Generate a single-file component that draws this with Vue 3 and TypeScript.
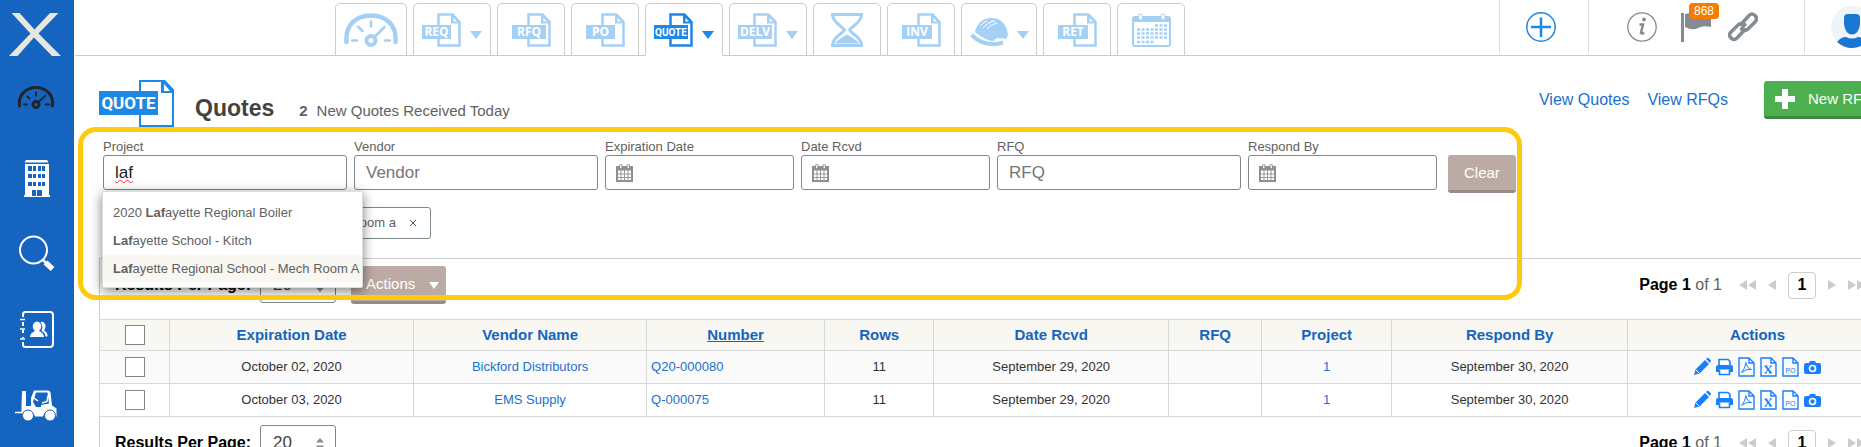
<script setup lang="ts">
import { ref } from 'vue'

interface Tab {
  id: string
  kind: 'gauge' | 'doc' | 'hourglass' | 'helmet' | 'calendar'
  label: string
  labelWidth?: number
  menu?: boolean
  active?: boolean
}

const tabs: Tab[] = [
  { id: 'dash', kind: 'gauge', label: 'Dashboard' },
  { id: 'req', kind: 'doc', label: 'REQ', labelWidth: 29, menu: true },
  { id: 'rfq', kind: 'doc', label: 'RFQ', labelWidth: 34 },
  { id: 'po', kind: 'doc', label: 'PO', labelWidth: 29 },
  { id: 'quote', kind: 'doc', label: 'QUOTE', labelWidth: 34, menu: true, active: true },
  { id: 'delv', kind: 'doc', label: 'DELV', labelWidth: 34, menu: true },
  { id: 'time', kind: 'hourglass', label: 'Pending' },
  { id: 'inv', kind: 'doc', label: 'INV', labelWidth: 30 },
  { id: 'jobs', kind: 'helmet', label: 'Jobs', menu: true },
  { id: 'ret', kind: 'doc', label: 'RET', labelWidth: 30 },
  { id: 'cal', kind: 'calendar', label: 'Calendar' },
]

interface Filter {
  id: string
  label: string
  date?: boolean
  placeholder?: string
}

const filters: Filter[] = [
  { id: 'project', label: 'Project' },
  { id: 'vendor', label: 'Vendor', placeholder: 'Vendor' },
  { id: 'expiration', label: 'Expiration Date', date: true },
  { id: 'received', label: 'Date Rcvd', date: true },
  { id: 'rfq', label: 'RFQ', placeholder: 'RFQ' },
  { id: 'respond', label: 'Respond By', date: true },
]

const values = ref<Record<string, string>>({
  project: 'laf', vendor: '', expiration: '', received: '', rfq: '', respond: '',
})

const suggestions = [
  { before: '2020 ', match: 'Laf', after: 'ayette Regional Boiler' },
  { before: '', match: 'Laf', after: 'ayette School - Kitch' },
  { before: '', match: 'Laf', after: 'ayette Regional School - Mech Room A' },
]
const highlighted = 2

const columns = [
  { key: 'exp', title: 'Expiration Date' },
  { key: 'vendor', title: 'Vendor Name' },
  { key: 'number', title: 'Number' },
  { key: 'rows', title: 'Rows' },
  { key: 'rcvd', title: 'Date Rcvd' },
  { key: 'rfq', title: 'RFQ' },
  { key: 'project', title: 'Project' },
  { key: 'respond', title: 'Respond By' },
  { key: 'actions', title: 'Actions' },
]

const quotes = [
  { exp: 'October 02, 2020', vendor: 'Bickford Distributors', number: 'Q20-000080', rows: 11, rcvd: 'September 29, 2020', project: 1, respond: 'September 30, 2020' },
  { exp: 'October 03, 2020', vendor: 'EMS Supply', number: 'Q-000075', rows: 11, rcvd: 'September 29, 2020', project: 1, respond: 'September 30, 2020' },
]

function clearFilters() {
  for (const key of Object.keys(values.value)) values.value[key] = ''
}
</script>

<template>
  <div class="app">
    <nav class="sidebar" aria-label="Main">
      <a class="logo" href="#" aria-label="Home">
        <svg viewBox="0 0 74 62"><path d="M11.500 13H19.500L34.500 29.500 50 13H58.500L38.500 33.500 61 56H52L34 37.500 17.500 56H9L30.500 33.500Z" fill="#e8e6e0" /></svg>
      </a>
      <a class="side-link" href="#" aria-label="Dashboard">
        <svg viewBox="0 62 74 76" fill="none" stroke="#20242b" stroke-linecap="round">
          <path d="M19.500 106C18 95 26 87.500 36 87.500S54 95 52.500 106" stroke-width="3" />
          <path d="M24 104.500h3M45.500 104.500h4M36 92.500v3M27.500 96.500l2 2M38 102.500l7.500-7" stroke-width="2" />
          <circle cx="36" cy="104.500" r="3" stroke-width="3" />
        </svg>
      </a>
      <a class="side-link" href="#" aria-label="Buildings">
        <svg viewBox="0 138 74 76">
          <path d="M26 160h21l1.500 2.500h-24zM25 164h24v31h1v2H24v-2h1z" fill="#fff" />
          <path d="M28 166h4v5h-4zM33 166h3v5h-3zM38 166h3v5h-3zM42 166h3v5h-3zM28 174h4v4h-4zM33 174h3v4h-3zM38 174h3v4h-3zM42 174h3v4h-3zM28 182h4v4h-4zM33 182h3v4h-3zM38 182h3v4h-3zM42 182h3v4h-3zM32 190h4v6h-4zM37 190h5v6h-5z" fill="#1565c0" />
        </svg>
      </a>
      <a class="side-link" href="#" aria-label="Search">
        <svg viewBox="0 214 74 76" fill="none" stroke="#fff">
          <circle cx="33.500" cy="250" r="13.500" stroke-width="2" />
          <path d="M43 260l3.500 3.500" stroke-width="2.500" />
          <path d="M45.500 262.500l7 6.500" stroke-width="5.500" />
        </svg>
      </a>
      <a class="side-link" href="#" aria-label="Contacts">
        <svg viewBox="0 290 74 76" fill="none" stroke="#fff" stroke-width="2">
          <path d="M23 317v-2.500q0-2.500 2.500-2.500H50q3 0 3 3v29q0 3-3 3H25.500q-2.500 0-2.500-2.500V342M23 322v4M23 330v3M23 337v1" />
          <path d="M20 319.500h5M20 329h5M20 339h5" stroke-width="1.500" />
          <path d="M30 337q0-4 5-6-3-3-2-6.500 1.500-3 4-3t4 3q1 3.500-2 6.500 5 2 5 6zM40.500 322q3-1 4.500 2t-1 6.500q4 2 3.500 6h-2q0-4-4-5.500 2-4.500-1-9z" fill="#fff" stroke="none" />
        </svg>
      </a>
      <a class="side-link" href="#" aria-label="Equipment">
        <svg viewBox="0 366 74 76" fill="none" stroke="#fff">
          <path d="M15 412.500h8" stroke-width="1.500" />
          <path d="M22 391h4v15h5v-8l3-7.500h14q2 0 2.500 2l1.500 13 4.500 3v8h-2.500q-2-5-5.500-5-4 0-5.500 5h-8q-2-6-7-6-4 0-6 3h-.5V406z" fill="#fff" stroke="none" />
          <path d="M33 402l3-9.500h11.500l1.500 11-8 1.500v2h-5z" fill="#1565c0" stroke="none" />
          <path d="M34 398l4 3M42 403l5-1.500 1-6" stroke-width="1.500" />
          <circle cx="28" cy="415.500" r="5.500" fill="#fff" stroke="#1565c0" />
          <circle cx="50" cy="415.500" r="5.500" fill="#fff" stroke="#1565c0" />
        </svg>
      </a>
    </nav>

    <div class="main">
      <header class="topbar">
        <div class="tabs">
          <a v-for="tab in tabs" :key="tab.id" href="#" class="tab" :class="[tab.kind, { active: tab.active, menu: tab.menu }]" :aria-label="tab.label">
            <svg v-if="tab.kind === 'gauge'" class="wide-icon" viewBox="0 0 54 34" fill="none" stroke="currentColor" stroke-linecap="round">
              <path d="M2.500 29C1 12 12 2.500 27 2.500S53 12 51.500 29" stroke-width="4.500" />
              <path d="M8 27.500h5M41 27.500h5M27 8.500v5M14 13.500l4.500 4.500M31 23.500l9.500-9.500" stroke-width="2.500" />
              <circle cx="27" cy="27.500" r="4.500" stroke-width="4" />
            </svg>
            <svg v-else-if="tab.kind === 'doc'" class="doc-icon" viewBox="0 0 39 34">
              <path d="M16.500 1.500H30.500L37.500 9V32.500H16.500Z" fill="#fff" stroke="currentColor" stroke-width="2.500" />
              <path d="M29 1v9.500h9V8.500L31 1Z" fill="currentColor" />
              <path d="M31.500 5v3.500h3.500z" fill="#fff" />
              <rect y="12" :width="tab.labelWidth" height="14" fill="currentColor" />
              <text :x="(tab.labelWidth ?? 0) / 2" y="23" class="doc-text" :class="{ small: tab.label.length > 4 }">{{ tab.label }}</text>
            </svg>
            <svg v-else-if="tab.kind === 'hourglass'" class="glass-icon" viewBox="0 0 36 34" fill="none" stroke="currentColor">
              <path d="M2 1.500H34M2 32.500H34" stroke-width="3" />
              <path d="M3.500 2C4 10 13 13 15.500 17 13 21 4 24 3.500 32M32.500 2C32 10 23 13 20.500 17 23 21 32 24 32.500 32" stroke-width="3" />
              <path d="M6 30.500Q8 27 18 21.500 28 27 30 30.500Z" fill="currentColor" stroke="none" />
            </svg>
            <svg v-else-if="tab.kind === 'helmet'" class="helmet-icon" viewBox="0 0 39 34" fill="none">
              <path d="M5 19Q8 6 20 5 33 4 37 17 39 23 36 26L31 25 29 28Q18 30 5 19Z" fill="currentColor" />
              <path d="M1.500 22Q15 35 33 29.500" stroke="currentColor" stroke-width="4" />
              <path d="M10 13Q13 9 17 8M13 15Q19 8 25 8M17 16Q21 11 27 10" stroke="#fff" />
              <path d="M24 29q0-4 5-4 2 0 3 3z" fill="#fff" />
            </svg>
            <svg v-else class="cal-icon" viewBox="0 0 39 34">
              <path d="M3 3H36Q39 3 39 6V31Q39 34 36 34H3Q0 34 0 31V6Q0 3 3 3Z" fill="currentColor" />
              <path d="M2 9H37V32H2Z" fill="#fff" />
              <path d="M23 12.500h12M5 16.500h30M5 20.500h30M5 24.500h30M5 29h17" stroke="currentColor" stroke-width="2.500" stroke-dasharray="3 1.500" />
              <rect x="6.500" y="1" width="4" height="6" rx="2" fill="#fff" stroke="currentColor" />
              <rect x="29" y="1" width="4" height="6" rx="2" fill="#fff" stroke="currentColor" />
            </svg>
            <svg v-if="tab.menu" class="caret" viewBox="0 0 12 8"><path d="M0 0H12L6 8Z" fill="currentColor" /></svg>
          </a>
        </div>
        <div class="tools">
          <div class="tool-group add">
            <button type="button" class="icon-button" aria-label="Add">
              <svg viewBox="0 0 30 30" fill="none" stroke="#1e88e5"><circle cx="15" cy="15" r="14.200" stroke-width="1.500" /><path d="M15 5.500V25M5 15H25" stroke-width="2.500" /></svg>
            </button>
          </div>
          <div class="tool-group status">
            <button type="button" class="icon-button" aria-label="Information">
              <svg viewBox="0 0 30 30" fill="none" stroke="#848c91"><circle cx="15" cy="15" r="14.200" stroke-width="1.300" /><path d="M12.500 12.500h3.500l-2 8.500q1.500 1 3-.5" stroke-width="2.500" /><circle cx="17" cy="7.500" r="1.900" fill="#848c91" stroke="none" /></svg>
            </button>
            <button type="button" class="icon-button flag" aria-label="Flags">
              <svg viewBox="0 0 30 30" fill="#848c91"><path d="M0 1H3V30H0ZM4 2Q10 0 17 3T30 4V15Q22 13 17 16T4 15Z" /></svg>
              <span class="badge">868</span>
            </button>
            <button type="button" class="icon-button" aria-label="Links">
              <svg viewBox="0 0 30 30" fill="none" stroke="#848c91" stroke-width="3.500" stroke-linecap="round">
                <path d="M13 12.500l8-9q3-3 6 0t0 6.500l-7 7q-3 2.500-6 .5" /><path d="M17 17.500l-8 8.500q-3 3-6 0t0-6l7-7q3-2.500 6-.5" /><path d="M13 17l4.500-4.500" stroke-width="2.500" />
              </svg>
            </button>
          </div>
          <div class="tool-group user">
            <button type="button" class="avatar" aria-label="Account">
              <svg viewBox="0 0 42 42"><circle cx="21" cy="21" r="21" fill="#eff4f9" /><path d="M13 12Q13 8 17 8H25Q29 8 29 12V18Q28 28 21 28.500 14 28 13 18ZM6 36Q10 31 15 31 21 34 27 31 32 31 36 36 29 42 21 42T6 36Z" fill="#1976d2" /></svg>
            </button>
          </div>
        </div>
      </header>

      <main class="content">
        <div class="heading">
          <svg class="heading-icon" viewBox="0 0 75 47">
            <path d="M41 1H65L74 10V46H41Z" fill="#fff" stroke="#1e88e5" stroke-width="2" />
            <path d="M62 0H66L75 10V13H62Z" fill="#1e88e5" /><path d="M65 4V11H71Z" fill="#fff" />
            <rect y="11" width="59" height="24" fill="#1e88e5" />
            <text x="29.500" y="29" class="heading-text">QUOTE</text>
          </svg>
          <h1>Quotes</h1>
          <p class="received"><strong>2</strong><span>New Quotes Received Today</span></p>
          <div class="heading-actions">
            <a href="#">View Quotes</a>
            <a href="#">View RFQs</a>
            <button type="button" class="button green">
              <svg viewBox="0 0 20 20"><path d="M7 0H13V7H20V13H13V20H7V13H0V7H7Z" fill="#fff" /></svg>
              New RFQ
            </button>
          </div>
        </div>

        <form class="filters" @submit.prevent>
          <div v-for="f in filters" :key="f.id" class="field" :class="{ date: f.date }">
            <label :for="f.id">{{ f.label }}</label>
            <div class="box">
              <svg v-if="f.date" class="date-icon" viewBox="0 0 17 18">
                <path d="M1 3H16V17H1Z" fill="#fff" stroke="#8f8f8f" stroke-width="2" />
                <path d="M0 2.500H17V6.500H0Z" fill="#8f8f8f" />
                <path d="M5 6V17M8.500 6V17M12 6V17M1 10H16M1 13.500H16" stroke="#999" />
                <rect x="3.500" y=".5" width="2.500" height="4" rx="1" fill="#eee" stroke="#8f8f8f" /><rect x="11" y=".5" width="2.500" height="4" rx="1" fill="#eee" stroke="#8f8f8f" />
              </svg>
              <input :id="f.id" v-model="values[f.id]" type="text" autocomplete="off" spellcheck="false" :placeholder="f.placeholder" :class="{ misspelled: f.id === 'project' }" />
            </div>
            <ul v-if="f.id === 'project'" class="suggestions" role="listbox">
              <li v-for="(s, i) in suggestions" :key="i" role="option" :aria-selected="i === highlighted" :class="{ highlighted: i === highlighted }">{{ s.before }}<b>{{ s.match }}</b>{{ s.after }}</li>
            </ul>
          </div>
          <button type="button" class="button brown clear" @click="clearFilters">Clear</button>
        </form>

        <div class="chips">
          <span class="chip">Lafayette Regional School - Mech room a
            <button type="button" aria-label="Remove filter"><svg viewBox="0 0 8 8"><path d="M1 1L7 7M7 1L1 7" stroke="#555" /></svg></button>
          </span>
        </div>

        <section class="panel">
          <template v-for="place in ['top', 'bottom']" :key="place">
            <div class="toolbar" :class="place">
              <label :for="'per-page-' + place">Results Per Page:</label>
              <div class="select">
                <select :id="'per-page-' + place"><option>20</option></select>
                <svg viewBox="0 0 8 12"><path d="M0 4.500L4 0 8 4.500ZM0 7.500H8L4 12Z" fill="#848c91" /></svg>
              </div>
              <button v-if="place === 'top'" type="button" class="button brown actions">Actions <svg viewBox="0 0 10 7"><path d="M0 0H10L5 7Z" fill="#fff" /></svg></button>
              <div class="pager">
                <span class="page-count"><b>Page 1</b> of 1</span>
                <button type="button" class="arrow double" aria-label="First page"><svg viewBox="0 0 17 10"><path d="M8 0V10L0 5ZM17 0V10L9 5Z" /></svg></button>
                <button type="button" class="arrow" aria-label="Previous page"><svg viewBox="0 0 8 10"><path d="M8 0V10L0 5Z" /></svg></button>
                <button type="button" class="page">1</button>
                <button type="button" class="arrow" aria-label="Next page"><svg viewBox="0 0 8 10"><path d="M0 0V10L8 5Z" /></svg></button>
                <button type="button" class="arrow double" aria-label="Last page"><svg viewBox="0 0 17 10"><path d="M0 0V10L8 5ZM9 0V10L17 5Z" /></svg></button>
              </div>
            </div>

            <table v-if="place === 'top'">
              <colgroup><col class="c-check" /><col v-for="c in columns" :key="c.key" :class="'c-' + c.key" /></colgroup>
              <thead>
                <tr>
                  <th><input type="checkbox" aria-label="Select all" /></th>
                  <th v-for="c in columns" :key="c.key"><a v-if="c.key !== 'actions'" href="#" :class="{ sorted: c.key === 'number' }">{{ c.title }}</a><span v-else>{{ c.title }}</span></th>
                </tr>
              </thead>
              <tbody>
                <tr v-for="q in quotes" :key="q.number">
                  <td><input type="checkbox" :aria-label="'Select ' + q.number" /></td>
                  <td>{{ q.exp }}</td>
                  <td><a href="#">{{ q.vendor }}</a></td>
                  <td class="left"><a href="#">{{ q.number }}</a></td>
                  <td>{{ q.rows }}</td>
                  <td>{{ q.rcvd }}</td>
                  <td></td>
                  <td><a href="#">{{ q.project }}</a></td>
                  <td>{{ q.respond }}</td>
                  <td>
                    <div class="row-actions">
                      <button type="button" aria-label="Edit"><svg viewBox="0 0 17 20"><path d="M0 18L1.500 12.500 11 3 15 7 5.500 16.500ZM12 2L13 1Q14 .5 15 1.500L16.500 3Q17.500 4 16.500 5L16 6Z" fill="#1a7ffb" /><path d="M2 13L5 16" stroke="#fff" /></svg></button>
                      <button type="button" aria-label="Print"><svg viewBox="0 0 17 20"><path d="M3 9V2.500H12L14 4.500V9M3.500 12.500V17.500H13.500V12.500" fill="#fff" stroke="#1a7ffb" stroke-width="1.600" /><path d="M2 8H15Q17 8 17 10V15H14V12.500H3V15H0V10Q0 8 2 8Z" fill="#1a7ffb" /></svg></button>
                      <button type="button" aria-label="PDF"><svg viewBox="0 0 17 20" fill="none" stroke="#1a7ffb"><path d="M1 1H11L16 6V19H1ZM11 1V6H16" stroke-width="1.400" /><path d="M3.500 15.500Q7 12 8 5.500 8.500 11 13.500 12.500 8 11.500 3.500 15.500Z" /></svg></button>
                      <button type="button" aria-label="Excel"><svg viewBox="0 0 17 20" fill="none" stroke="#1a7ffb"><path d="M1 1H11L16 6V19H1ZM11 1V6H16" stroke-width="1.400" /><path d="M5.500 9L11 16" stroke-width="2" /><path d="M11 9L5.500 16M4.500 9H7.500M9.500 9H12M4.500 16H7M9 16H12" /></svg></button>
                      <button type="button" aria-label="Purchase order"><svg viewBox="0 0 17 20" fill="none" stroke="#1a7ffb"><path d="M1 1H11L16 6V19H1ZM11 1V6H16" stroke-width="1.400" /><text x="8.500" y="16" class="po-text">PO</text></svg></button>
                      <button type="button" aria-label="Photos"><svg viewBox="0 0 17 20"><path d="M5 6L6 4H11L12 6H15Q17 6 17 8V15Q17 17 15 17H2Q0 17 0 15V8Q0 6 2 6Z" fill="#1a7ffb" /><circle cx="8.500" cy="11.500" r="3" fill="none" stroke="#fff" stroke-width="1.700" /></svg></button>
                    </div>
                  </td>
                </tr>
              </tbody>
            </table>
          </template>
        </section>
        <div class="callout" aria-hidden="true"></div>
      </main>
    </div>
  </div>
</template>

<style>
body { margin: 0; overflow: hidden; }
</style>

<style scoped>
.app { display: flex; height: 100vh; overflow: hidden; background: #fff; color: #333; font: 13px/16px "Liberation Sans", Arial, sans-serif; }
.app * { box-sizing: border-box; }
button, input, select { margin: 0; font: inherit; color: inherit; }
button { padding: 0; border: 0; background: none; cursor: pointer; }
a { color: #1b6fd0; text-decoration: none; }
svg { display: block; flex: none; }

.sidebar { flex: none; width: 74px; background: #1565c0; }
.logo, .side-link { display: block; }
.logo svg { width: 74px; height: 62px; }
.side-link svg { width: 74px; height: 76px; }

/* The page is wider than the viewport; the overflow is clipped on the right. */
.main { flex: 1; min-width: 0; margin-left: 1px; margin-right: -26px; }

.topbar { display: flex; justify-content: space-between; height: 56px; border-bottom: 1px solid #ccc; }
.tabs { display: flex; align-items: flex-end; gap: 6px; margin: 0 0 -1px 260px; }
.tab { display: flex; align-items: center; justify-content: center; width: 68px; height: 53px; border: 1px solid #ccc; border-radius: 5px 5px 0 0; color: #a5d0f6; background: #fff; }
.tab.gauge { width: 72px; }
.tab.menu { width: 78px; gap: 9px; }
.tab.helmet { width: 76px; gap: 8px; }
.tab.active { color: #1e88e5; border-bottom-color: #fff; }
.wide-icon { width: 54px; height: 34px; }
.doc-icon, .cal-icon, .helmet-icon { width: 39px; height: 34px; }
.glass-icon { width: 36px; height: 34px; }
.caret { width: 12px; height: 8px; margin-top: 11px; }
.doc-text { font: bold 12px "Open Sans", "Noto Sans", sans-serif; fill: #fff; text-anchor: middle; }
.doc-text.small { font: bold 10px Roboto, sans-serif; }

.tools { display: flex; height: 53px; }
.tool-group { display: flex; align-items: center; justify-content: center; border-left: 1px solid #ddd; }
.add { width: 89px; padding-right: 6px; }
.status { width: 216px; gap: 17px; justify-content: flex-start; padding-left: 38px; }
.user { width: 83px; justify-content: flex-start; padding-left: 26px; }
.icon-button { position: relative; }
.icon-button svg { width: 30px; height: 30px; }
.flag { margin-left: 7px; }
.badge { position: absolute; left: 8px; top: -9px; padding: 0 5px; border-radius: 4px; background: #f57c00; color: #fff; font-size: 12px; line-height: 16px; }
.avatar svg { width: 42px; height: 42px; }

.content { position: relative; margin-left: 24px; }
.heading { display: flex; align-items: flex-end; padding-top: 24px; }
.heading-icon { width: 75px; height: 47px; }
.heading-text { font: bold 17px Roboto, sans-serif; fill: #fff; text-anchor: middle; }
h1 { margin: 0 0 6px 21px; font-size: 23px; line-height: 26px; color: #424242; }
.received { display: flex; gap: 9px; margin: 0 0 7px 25px; font-size: 15px; line-height: 18px; color: #616161; }
.heading-actions { display: flex; align-items: center; align-self: flex-start; gap: 18px; margin: 1px 0 0 auto; font-size: 16px; }
.button { display: flex; align-items: center; height: 38px; border-radius: 3px; color: #fff; font-size: 15px; }
.green { gap: 13px; margin-left: 18px; padding: 0 11px; width: 123px; background: #4caf50; border-bottom: 3px solid #3d8b40; white-space: nowrap; }
.green svg { width: 20px; height: 20px; }
.brown { background: #bcaaa4; border-bottom: 3px solid #998a85; }

.filters { display: flex; align-items: flex-start; gap: 7px; padding: 12px 0 0 4px; color: #616161; }
.field { position: relative; width: 244px; }
.field.date { width: 189px; }
.field label { display: block; }
.box { display: flex; align-items: center; height: 35px; border: 1px solid #7d868b; border-radius: 3px; background: #fff; }
.box input { flex: 1; min-width: 0; height: 100%; padding: 0 11px; border: 0; outline: 0; background: none; font-size: 17px; color: #212121; }
.box input::placeholder { color: #757575; opacity: 1; }
.misspelled { text-decoration: underline wavy #f22 1px; text-decoration-skip-ink: none; }
.date-icon { width: 17px; height: 18px; margin-left: 10px; }
.clear { margin: 16px 0 0 4px; padding: 0 16px; }
.suggestions { position: absolute; z-index: 2; left: -1px; top: 52px; width: 261px; margin: 0; padding: 7px 0 4px; list-style: none; background: #fff; border: 1px solid #ddd; border-radius: 2px; box-shadow: 0 3px 12px rgba(0, 0, 0, .5); white-space: nowrap; }
.suggestions li { padding: 0 10px; line-height: 28px; color: #616161; }
.suggestions .highlighted { background: #f8f7f2; }

.chips { display: flex; padding: 14px 0 19px 4px; }
.chip { display: flex; align-items: center; justify-content: flex-end; gap: 13px; width: 328px; height: 32px; padding: 0 13px 0 0; border: 1px solid #7d868b; border-radius: 3px; color: #616161; white-space: nowrap; }
.chip svg { width: 8px; height: 8px; }

.panel { margin-right: -2px; border: solid #ccc; border-width: 1px 0 0 1px; }
.toolbar { display: flex; align-items: center; padding: 7px 0 15px 15px; color: #000; font-size: 16px; }
.toolbar.bottom { padding-top: 8px; }
.toolbar label { font-weight: bold; }
.select { position: relative; margin-left: 9px; }
.select select { display: block; width: 76px; height: 36px; padding: 0 12px; appearance: none; border: 1px solid #7d868b; border-radius: 3px; background: #fff; color: #424242; font-size: 17px; }
.select svg { position: absolute; right: 12px; top: 13px; width: 8px; height: 12px; pointer-events: none; }
.actions { gap: 14px; margin-left: 15px; padding: 0 7px 0 15px; }
.actions svg { width: 10px; height: 7px; margin-top: 4px; }
.pager { display: flex; align-items: center; gap: 12px; margin-left: auto; height: 35px; margin-right: 24px; }
.page-count { margin-right: 5px; color: #616161; }
.page-count b { color: #000; }
.arrow svg { width: 8px; height: 10px; fill: #ccc; }
.arrow.double svg { width: 17px; }
.page { width: 28px; height: 27px; border: 1px solid #ccc; border-radius: 4px; font-weight: bold; color: #000; }

table { width: 100%; margin-left: -1px; table-layout: fixed; border-collapse: collapse; }
th, td { height: 33px; padding: 0 4px; border: 1px solid #d8d8d8; text-align: center; }
th { height: 31px; background: #f8f7f2; color: #1565c0; font-size: 15px; }
th a { color: #1565c0; }
.sorted { text-decoration: underline; }
td.left { text-align: left; }
tbody tr:nth-child(odd) { background: #fafafa; }
input[type="checkbox"] { display: block; width: 20px; height: 20px; margin: 0 auto; appearance: none; border: 1px solid #7d868b; background: #fff; }
.row-actions { display: flex; justify-content: center; gap: 5px; }
.row-actions svg { width: 17px; height: 20px; }
.po-text { font: 7px "Liberation Sans", Arial, sans-serif; fill: #1a7ffb; stroke: none; text-anchor: middle; }
.c-check { width: 3.92%; }
.c-exp { width: 13.65%; }
.c-vendor { width: 13.03%; }
.c-number { width: 9.96%; }
.c-rows { width: 6.1%; }
.c-rcvd { width: 13.14%; }
.c-rfq { width: 5.2%; }
.c-project { width: 7.27%; }
.c-respond { width: 13.2%; }

.callout { position: absolute; z-index: 3; left: -21px; top: 71px; right: 365px; height: 173px; border: 5px solid #ffc90e; border-radius: 18px; pointer-events: none; }
</style>
